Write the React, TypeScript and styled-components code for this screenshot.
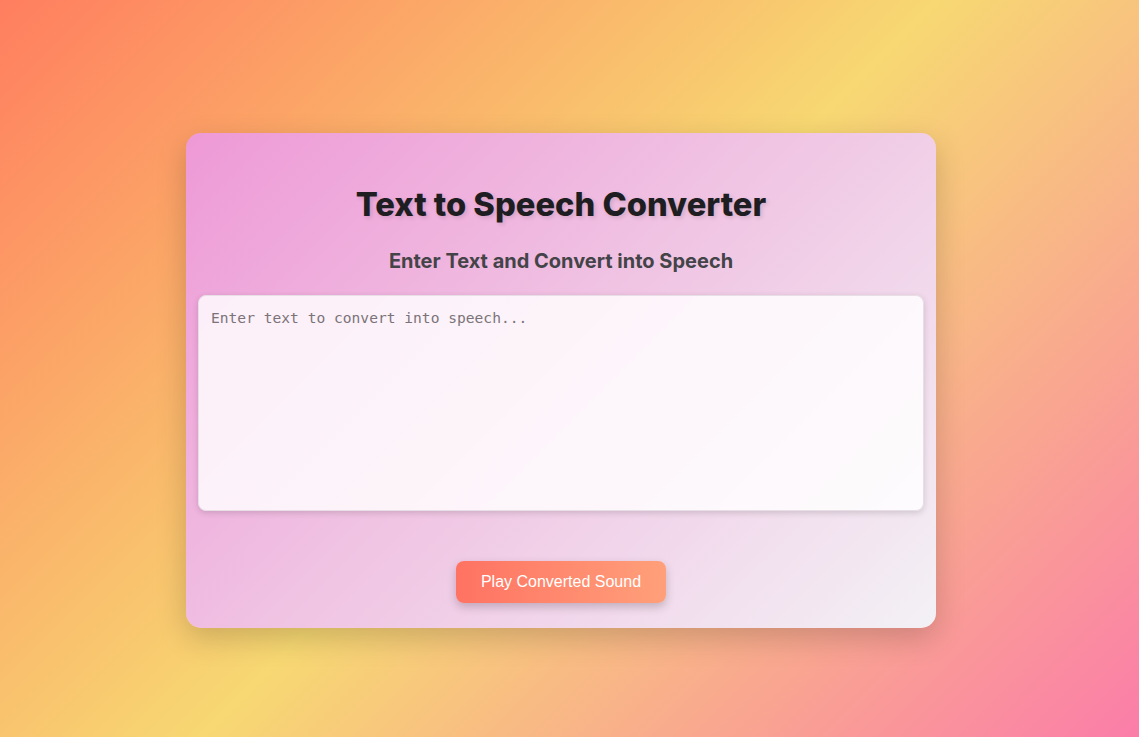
import React from "react";
import styled, { createGlobalStyle } from "styled-components";

const Global = createGlobalStyle`
  html, body { margin: 0; padding: 0; }
  body {
    width: 1139px;
    height: 737px;
    overflow: hidden;
    background: linear-gradient(135deg, #ff7e5f 0%, #f7d872 50%, #fb7da9 100%);
  }
  #root { height: 100%; }
`;

const Page = styled.main`
  height: 737px;
  box-sizing: border-box;
  padding: 23px 17px 0 0;
  display: flex;
  align-items: center;
  justify-content: center;
`;

const Card = styled.section`
  width: 750px;
  box-sizing: border-box;
  padding: 50px 12px 25px 12px;
  border-radius: 15px;
  background: linear-gradient(135deg, #ee99d6 0%, #f0c6e4 50%, #f3f1f5 100%);
  box-shadow: 0 10px 30px rgba(0, 0, 0, 0.18);
  display: flex;
  flex-direction: column;
  align-items: center;
`;

const Title = styled.h1`
  margin: 0;
  font-family: Inter, "Noto Sans", sans-serif;
  font-weight: 800;
  font-size: 32.7px;
  line-height: 42px;
  color: #1e1e22;
  text-shadow: 2px 2px 4px rgba(0, 0, 0, 0.12);
`;

const Subtitle = styled.h2`
  margin: 24px 0 0 0;
  font-family: Inter, "Noto Sans", sans-serif;
  font-weight: 700;
  font-size: 20px;
  line-height: 24px;
  color: #444448;
`;

const TextArea = styled.textarea`
  margin-top: 22px;
  width: 100%;
  height: 216px;
  box-sizing: border-box;
  padding: 12px 12px;
  border: 1px solid #e8dfe6;
  border-radius: 8px;
  background: rgba(255, 255, 255, 0.82);
  box-shadow: 0 2px 6px rgba(0, 0, 0, 0.15);
  resize: none;
  outline: none;
  font-family: "DejaVu Sans Mono", "Liberation Mono", monospace;
  font-size: 14.6px;
  line-height: 20px;
  color: #333;
  &::placeholder {
    color: #7b7378;
  }
`;

const PlayButton = styled.button`
  margin-top: 50px;
  height: 42px;
  padding: 0 25px;
  border: none;
  border-radius: 8px;
  background: linear-gradient(90deg, #ff7262 0%, #ffa07a 100%);
  color: #ffffff;
  font-family: "Liberation Sans", Arial, sans-serif;
  font-size: 16px;
  cursor: pointer;
  box-shadow: 0 4px 10px rgba(0, 0, 0, 0.2);
`;

export default function App() {
  return (
    <>
      <Global />
      <Page>
        <Card>
          <Title>Text to Speech Converter</Title>
          <Subtitle>Enter Text and Convert into Speech</Subtitle>
          <TextArea placeholder="Enter text to convert into speech..." />
          <PlayButton>Play Converted Sound</PlayButton>
        </Card>
      </Page>
    </>
  );
}
